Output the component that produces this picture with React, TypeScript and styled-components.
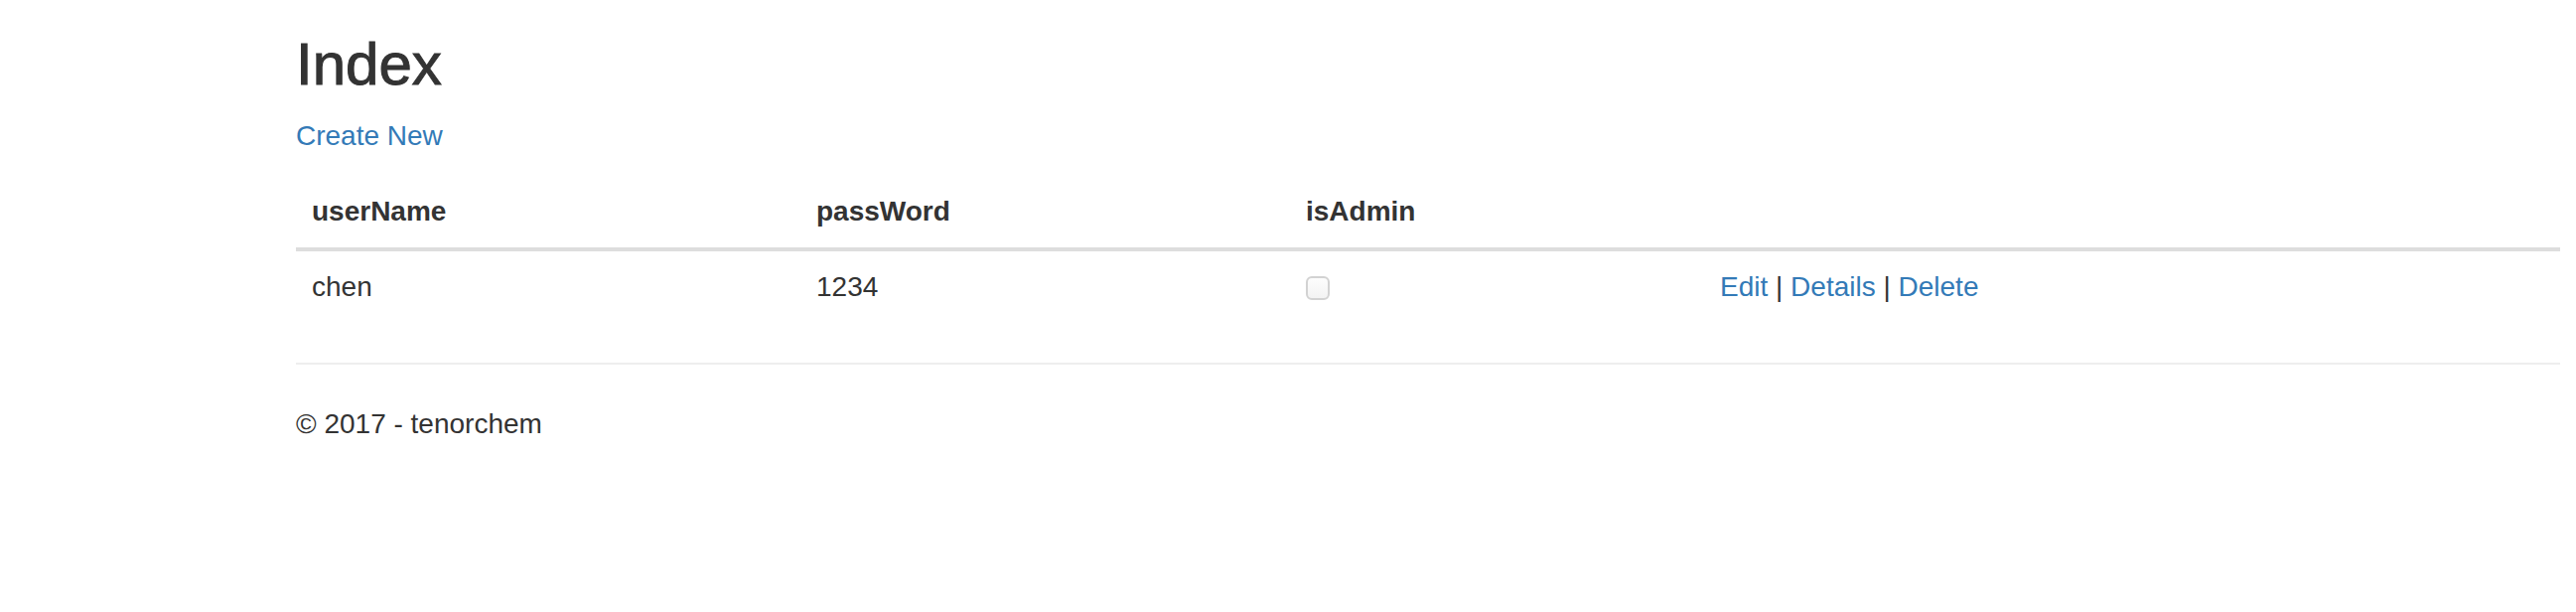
import React from "react";
import styled, { createGlobalStyle } from "styled-components";

const GlobalStyle = createGlobalStyle`
  html, body {
    margin: 0;
    padding: 0;
    background: #fff;
  }
  body {
    font-family: "Liberation Sans", Arial, Helvetica, sans-serif;
    font-size: 28px;
    line-height: 40px;
    color: #333;
  }
`;

const Container = styled.div`
  width: 2280px;
  margin-left: 298px;
  padding-top: 32px;
`;

const Title = styled.h2`
  margin: 0 0 19px;
  font-size: 60px;
  line-height: 66px;
  font-weight: 400;
  color: #333;
  -webkit-text-stroke: 1px #333;
`;

const Para = styled.p`
  margin: 0 0 20px;
`;

const Link = styled.a`
  color: #337ab7;
  text-decoration: none;
  cursor: pointer;
`;

const Table = styled.table`
  width: 100%;
  border-collapse: collapse;
  border-spacing: 0;
  margin-bottom: 40px;
`;

const HeadCell = styled.th<{ $w?: number }>`
  text-align: left;
  font-weight: 700;
  padding: 16px;
  line-height: 40px;
  vertical-align: bottom;
  border-bottom: 4px solid #ddd;
  width: ${(p) => (p.$w ? `${p.$w}px` : "auto")};
  box-sizing: border-box;
`;

const Cell = styled.td`
  padding: 16px;
  line-height: 40px;
  vertical-align: top;
`;

const Check = styled.input`
  appearance: none;
  -webkit-appearance: none;
  box-sizing: border-box;
  width: 24px;
  height: 24px;
  margin: 0;
  vertical-align: middle;
  position: relative;
  top: -1px;
  border: 2px solid #d2d2d2;
  border-radius: 6px;
  background: linear-gradient(#fdfdfd, #f3f3f3);
`;

const Sep = styled.span`
  color: #333;
`;

const Rule = styled.hr`
  margin: 0 0 40px;
  border: 0;
  border-top: 2px solid #eee;
  height: 0;
`;

const Footer = styled.footer`
  p {
    margin: 0 0 20px;
  }
`;

export default function App() {
  return (
    <>
      <GlobalStyle />
      <Container>
        <Title>Index</Title>
        <Para>
          <Link>Create New</Link>
        </Para>
        <Table>
          <thead>
            <tr>
              <HeadCell $w={508}>userName</HeadCell>
              <HeadCell $w={493}>passWord</HeadCell>
              <HeadCell $w={417}>isAdmin</HeadCell>
              <HeadCell></HeadCell>
            </tr>
          </thead>
          <tbody>
            <tr>
              <Cell>chen</Cell>
              <Cell>1234</Cell>
              <Cell>
                <Check type="checkbox" disabled />
              </Cell>
              <Cell>
                <Link>Edit</Link> <Sep>|</Sep> <Link>Details</Link> <Sep>|</Sep>{" "}
                <Link>Delete</Link>
              </Cell>
            </tr>
          </tbody>
        </Table>
        <Rule />
        <Footer>
          <p>© 2017 - tenorchem</p>
        </Footer>
      </Container>
    </>
  );
}
